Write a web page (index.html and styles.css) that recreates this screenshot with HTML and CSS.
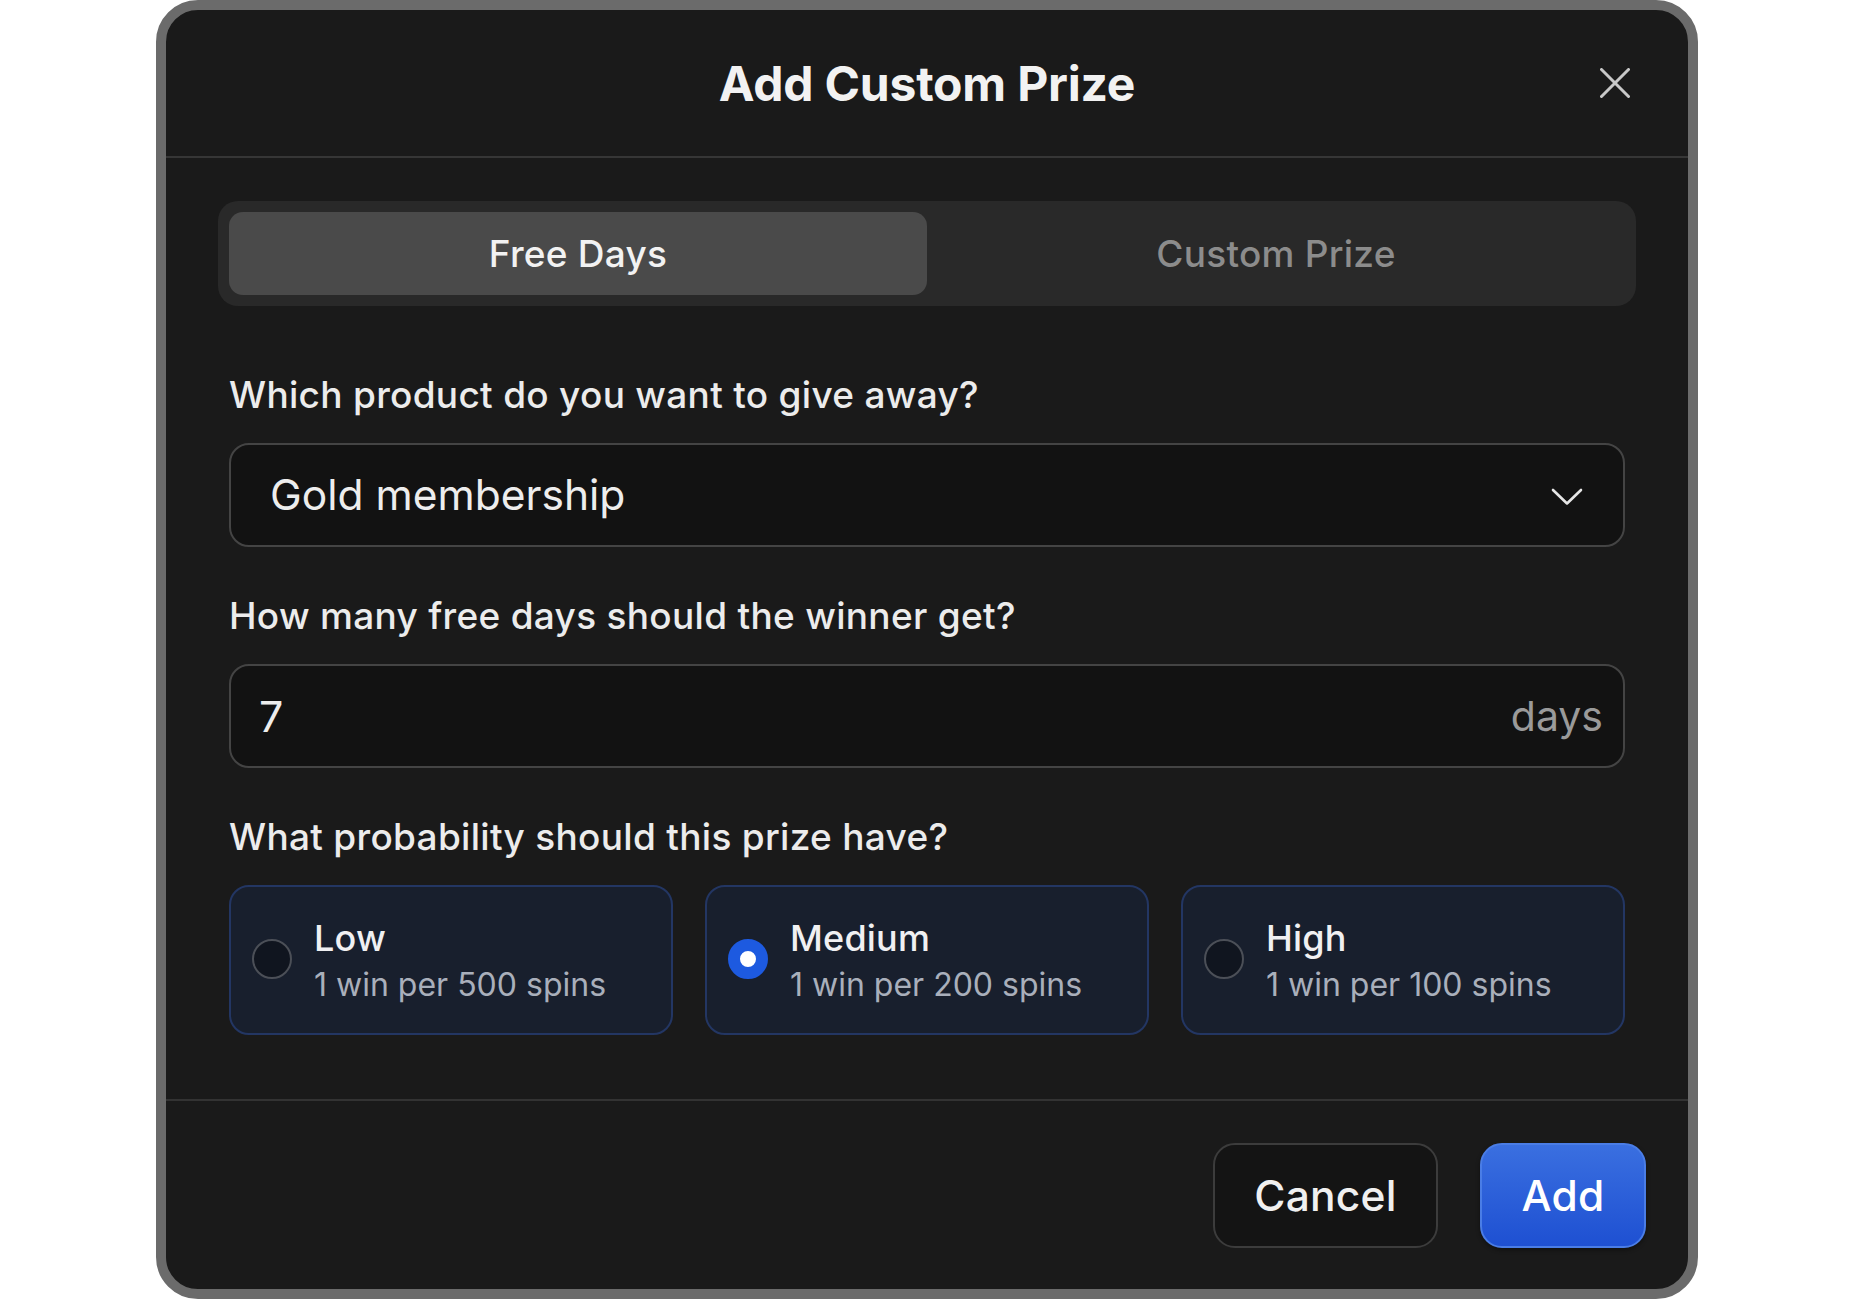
FILE: index.html
```html
<!DOCTYPE html>
<html lang="en">
<head>
<meta charset="utf-8">
<title>Add Custom Prize</title>
<link rel="stylesheet" href="styles.css">
</head>
<body>
<div class="modal">
  <header class="modal-header">
    <h1 class="modal-title">Add Custom Prize</h1>
    <button class="close-btn" aria-label="Close">
      <svg width="30" height="30" viewBox="0 0 30 30" fill="none" stroke="#c8c8c8" stroke-width="3" stroke-linecap="round">
        <path d="M1.5 1.5 L28.5 28.5 M28.5 1.5 L1.5 28.5"/>
      </svg>
    </button>
  </header>
  <main class="modal-body">
    <div class="tabs">
      <div class="tab tab-active">Free Days</div>
      <div class="tab">Custom Prize</div>
    </div>

    <label class="field-label first">Which product do you want to give away?</label>
    <div class="select">
      <span class="select-value">Gold membership</span>
      <svg class="chevron" width="32" height="18" viewBox="0 0 32 18" fill="none" stroke="#e6e6e6" stroke-width="2.6" stroke-linecap="round" stroke-linejoin="round">
        <path d="M2 2 L16 15.5 L30 2"/>
      </svg>
    </div>

    <label class="field-label">How many free days should the winner get?</label>
    <div class="input">
      <span class="input-value">7</span>
      <span class="input-suffix">days</span>
    </div>

    <label class="field-label">What probability should this prize have?</label>
    <div class="options">
      <div class="option">
        <span class="radio"></span>
        <div class="option-text">
          <div class="option-title">Low</div>
          <div class="option-sub">1 win per 500 spins</div>
        </div>
      </div>
      <div class="option">
        <span class="radio radio-on"></span>
        <div class="option-text">
          <div class="option-title">Medium</div>
          <div class="option-sub">1 win per 200 spins</div>
        </div>
      </div>
      <div class="option">
        <span class="radio"></span>
        <div class="option-text">
          <div class="option-title">High</div>
          <div class="option-sub">1 win per 100 spins</div>
        </div>
      </div>
    </div>
  </main>
  <footer class="modal-footer">
    <button class="btn btn-cancel">Cancel</button>
    <button class="btn btn-add">Add</button>
  </footer>
</div>
</body>
</html>
```

FILE: styles.css
```css
* { box-sizing: border-box; }

html, body {
  margin: 0;
  padding: 0;
  background: #ffffff;
  font-family: Inter, "Noto Sans", "Liberation Sans", sans-serif;
}

.modal {
  width: 1542px;
  height: 1299px;
  margin: 0 auto;
  border: 10px solid #6b6b6b;
  border-radius: 42px;
  background: #1a1a1a;
  display: flex;
  flex-direction: column;
  overflow: hidden;
}

.modal-header {
  position: relative;
  height: 148px;
  border-bottom: 2px solid #363636;
  display: flex;
  align-items: center;
  justify-content: center;
  flex-shrink: 0;
}

.modal-title {
  margin: 0;
  padding-top: 2px;
  font-size: 48px;
  line-height: 58px;
  font-weight: 700;
  color: #f2f2f2;
  letter-spacing: -0.2px;
}

.close-btn {
  position: absolute;
  right: 58px;
  top: 58px;
  width: 30px;
  height: 30px;
  padding: 0;
  border: none;
  background: transparent;
  display: flex;
}

.modal-body {
  flex: 1;
  padding: 43px 63px 0 63px;
  display: flex;
  flex-direction: column;
}

.tabs {
  margin: 0 -11px;
  padding: 11px;
  height: 105px;
  background: #292929;
  border-radius: 20px;
  display: grid;
  grid-template-columns: 1fr 1fr;
}

.tab {
  display: flex;
  align-items: center;
  justify-content: center;
  font-size: 37px;
  letter-spacing: 0.25px;
  font-weight: 500;
  color: #8c8c8c;
  border-radius: 14px;
}

.tab-active {
  background: #4a4a4a;
  color: #f2f2f2;
}

.field-label {
  display: block;
  margin-top: 47px;
  margin-bottom: 26px;
  font-size: 37px;
  letter-spacing: 0.3px;
  line-height: 44px;
  font-weight: 500;
  color: #ececec;
}

.field-label.first {
  margin-top: 67px;
}

.select, .input {
  height: 104px;
  border: 2px solid #444444;
  border-radius: 20px;
  background: #121212;
  display: flex;
  align-items: center;
  justify-content: space-between;
}

.select {
  padding: 0 40px 0 39px;
}

.select-value {
  font-size: 42.5px;
  line-height: 54px;
  color: #ededed;
}

.chevron {
  margin-top: 4px;
}

.input {
  padding: 0 20px 0 28px;
}

.input-value {
  font-size: 43px;
  line-height: 54px;
  color: #ededed;
}

.input-suffix {
  font-size: 41px;
  line-height: 54px;
  color: #9a9a9a;
}

.options {
  display: grid;
  grid-template-columns: repeat(3, 1fr);
  gap: 32px;
}

.option {
  height: 150px;
  border: 2px solid #233663;
  border-radius: 20px;
  background: #181f2d;
  display: flex;
  align-items: center;
  padding-left: 21px;
  gap: 22px;
}

.radio {
  width: 40px;
  height: 40px;
  border-radius: 50%;
  border: 2px solid #4b4f57;
  background: #10151f;
  flex-shrink: 0;
  margin-top: -3px;
}

.radio-on {
  border: 12px solid #1d5ae0;
  background: #ffffff;
}

.option-text {
  display: flex;
  flex-direction: column;
  gap: 5px;
}

.option-title {
  font-size: 36px;
  letter-spacing: 0.2px;
  line-height: 44px;
  font-weight: 500;
  color: #f0f0f2;
}

.option-sub {
  font-size: 32px;
  line-height: 40px;
  color: #a9afbb;
}

.modal-footer {
  height: 190px;
  flex-shrink: 0;
  border-top: 2px solid #333333;
  display: flex;
  align-items: center;
  justify-content: flex-end;
  padding: 0 42px;
  gap: 42px;
}

.btn {
  height: 105px;
  border-radius: 22px;
  font-family: Inter, "Noto Sans", "Liberation Sans", sans-serif;
  font-size: 42.5px;
  letter-spacing: 0.2px;
  font-weight: 500;
  padding: 0;
}

.btn-cancel {
  width: 225px;
  background: #141414;
  border: 2px solid #3c3c3c;
  color: #f0f0f0;
}

.btn-add {
  width: 166px;
  background: linear-gradient(#3a6fe0, #1e50d2);
  border: 2px solid #4a7de6;
  color: #ffffff;
  box-shadow: 0 2px 4px rgba(0, 0, 0, 0.4);
}
```
